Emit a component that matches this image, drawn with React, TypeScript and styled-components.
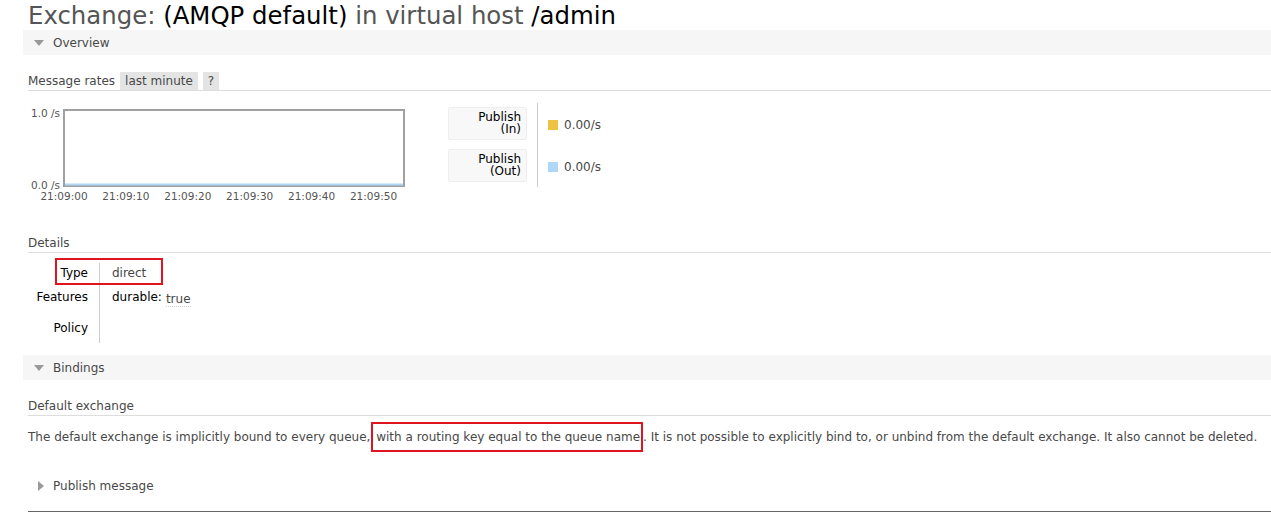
import React from "react";
import styled, { createGlobalStyle } from "styled-components";

const Global = createGlobalStyle`
  html, body { margin: 0; padding: 0; background: #fff; }
  body { font: 12px "DejaVu Sans", Verdana, sans-serif; color: #484848; }
`;

const Page = styled.div`
  padding: 0 0 0 28px;
  display: flex;
  flex-direction: column;
`;

const Title = styled.h1`
  margin: 2px 0 0;
  font-size: 24.4px;
  line-height: 28px;
  font-weight: normal;
  color: #555;
  white-space: nowrap;
  b { font-weight: normal; color: #000; }
`;

const SectionBar = styled.div<{ $mt?: number }>`
  margin-top: ${(p) => p.$mt ?? 0}px;
  margin-left: -5px;
  height: 25px;
  background: #f6f6f6;
  display: flex;
  align-items: center;
  gap: 9px;
  padding-left: 11px;
  color: #484848;
`;

const Tri = styled.span<{ $open: boolean }>`
  width: 0;
  height: 0;
  ${(p) =>
    p.$open
      ? `border-left: 5px solid transparent; border-right: 5px solid transparent; border-top: 6px solid #999; margin-top: 1px;`
      : `border-top: 5px solid transparent; border-bottom: 5px solid transparent; border-left: 6px solid #999;`}
`;

const SubHead = styled.div<{ $mt: number }>`
  margin-top: ${(p) => p.$mt}px;
  border-bottom: 1px solid #ddd;
  display: flex;
  align-items: center;
  gap: 5px;
  height: 19px;
`;

const Pill = styled.span`
  background: #e4e4e4;
  padding: 0 5px;
  line-height: 18px;
  color: #484848;
`;

const ChartRow = styled.div`
  display: flex;
  margin-top: 12px;
  align-items: flex-start;
`;

const Legend = styled.div`
  margin-left: 38px;
  display: flex;
`;

const LegendLabels = styled.div`
  display: flex;
  flex-direction: column;
  gap: 9px;
  padding-top: 4px;
  padding-right: 10px;
  border-right: 1px solid #ccc;
  height: 80px;
`;

const LegendBox = styled.div`
  width: 79px;
  height: 33px;
  box-sizing: border-box;
  background: #f8f8f8;
  border: 1px solid #eee;
  border-radius: 2px;
  text-align: right;
  padding: 3px 5px 0 0;
  line-height: 12px;
  color: #000;
`;

const LegendValues = styled.div`
  display: flex;
  flex-direction: column;
  padding-left: 10px;
  padding-top: 15px;
  gap: 28px;
`;

const Rate = styled.div`
  display: flex;
  align-items: center;
  gap: 6px;
  line-height: 14px;
`;

const Swatch = styled.span<{ $c: string }>`
  width: 10px;
  height: 10px;
  background: ${(p) => p.$c};
`;

const Table = styled.div`
  position: relative;
  display: grid;
  grid-template-columns: 72px auto;
  margin-top: 10px;
  width: max-content;
`;

const Label = styled.div<{ $h: number }>`
  height: ${(p) => p.$h}px;
  padding-right: 11px;
  box-sizing: border-box;
  border-right: 1px solid #ccc;
  color: #000;
  display: flex;
  align-items: center;
  justify-content: flex-end;
`;

const Value = styled.div<{ $h: number }>`
  height: ${(p) => p.$h}px;
  padding-left: 12px;
  display: flex;
  align-items: center;
  gap: 4px;
`;

const Key = styled.span`
  color: #000;
`;

const Abbr = styled.span`
  border-bottom: 1px dotted #ccc;
  padding-top: 4px;
`;

const Highlight = styled.div`
  position: absolute;
  left: 27px;
  top: -5px;
  width: 108px;
  height: 27px;
  box-sizing: border-box;
  border: 2px solid #e0141e;
  pointer-events: none;
`;

const Para = styled.p`
  margin: 13px 0 0;
  white-space: nowrap;
  line-height: 16px;
`;

const Marked = styled.span`
  border: 2px solid #e0141e;
  padding: 6px 1px 6px 3px;
  margin-left: -3px;
`;

const BottomBar = styled.div`
  margin-top: 32px;
  height: 18px;
  display: flex;
  align-items: center;
  gap: 9px;
  padding-left: 10px;
`;

const Rule = styled.div`
  margin-top: 16px;
  border-top: 1px solid #666;
`;

const xLabels = ["21:09:00", "21:09:10", "21:09:20", "21:09:30", "21:09:40", "21:09:50"];

function Chart() {
  return (
    <svg width={382} height={100} viewBox="0 0 382 100" style={{ display: "block" }}>
      <text x={32} y={13.5} fontSize={10.5} textAnchor="end" fill="#545454" fontFamily="DejaVu Sans, sans-serif">1.0 /s</text>
      <text x={32} y={85.5} fontSize={10.5} textAnchor="end" fill="#545454" fontFamily="DejaVu Sans, sans-serif">0.0 /s</text>
      <rect x={36} y={7} width={340} height={76} fill="#fff" stroke="#a0a0a0" strokeWidth={2} />
      <line x1={37} y1={81.5} x2={375} y2={81.5} stroke="#afd8f8" strokeWidth={2} />
      {xLabels.map((l, i) => (
        <text key={l} x={36 + i * 61.9} y={96.5} fontSize={10.5} textAnchor="middle" fill="#545454" fontFamily="DejaVu Sans, sans-serif">{l}</text>
      ))}
    </svg>
  );
}

export default function App() {
  return (
    <>
      <Global />
      <Page>
        <Title>
          Exchange: <b>(AMQP default)</b> in virtual host <b>/admin</b>
        </Title>
        <SectionBar>
          <Tri $open />
          Overview
        </SectionBar>
        <SubHead $mt={16}>
          Message rates <Pill>last minute</Pill>
          <Pill>?</Pill>
        </SubHead>
        <ChartRow>
          <Chart />
          <Legend>
            <LegendLabels>
              <LegendBox>Publish<br />(In)</LegendBox>
              <LegendBox>Publish<br />(Out)</LegendBox>
            </LegendLabels>
            <LegendValues>
              <Rate><Swatch $c="#edc240" />0.00/s</Rate>
              <Rate><Swatch $c="#afd8f8" />0.00/s</Rate>
            </LegendValues>
          </Legend>
        </ChartRow>
        <SubHead $mt={30}>Details</SubHead>
        <Table>
          <Label $h={19}>Type</Label>
          <Value $h={19}>direct</Value>
          <Label $h={30}>Features</Label>
          <Value $h={30}><Key>durable:</Key> <Abbr>true</Abbr></Value>
          <Label $h={31}>Policy</Label>
          <Value $h={31}></Value>
          <Highlight />
        </Table>
        <SectionBar $mt={12}>
          <Tri $open />
          Bindings
        </SectionBar>
        <SubHead $mt={16}>Default exchange</SubHead>
        <Para>
          The default exchange is implicitly bound to every queue, <Marked>with a routing key equal to the queue name</Marked>. It is not possible to explicitly bind to, or unbind from the default exchange. It also cannot be deleted.
        </Para>
        <BottomBar>
          <Tri $open={false} />
          Publish message
        </BottomBar>
        <Rule />
      </Page>
    </>
  );
}
